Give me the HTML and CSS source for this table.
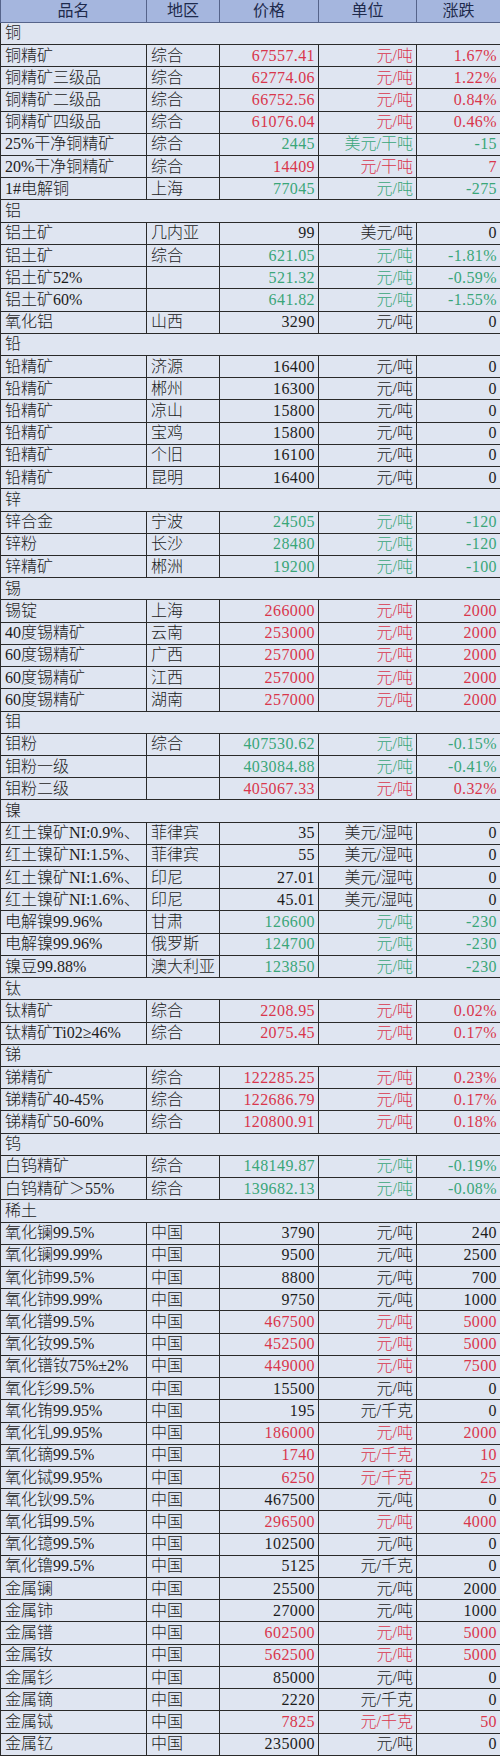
FILE: index.html
```html
<!DOCTYPE html>
<html lang="zh-CN">
<head>
<meta charset="utf-8">
<title>有色金属价格</title>
<link rel="stylesheet" href="styles.css">
</head>
<body>
<table class="price-table">
<colgroup>
<col class="c-name"><col class="c-region"><col class="c-price"><col class="c-unit"><col class="c-chg">
</colgroup>
<thead>
<tr><th>品名</th><th>地区</th><th>价格</th><th>单位</th><th>涨跌</th></tr>
</thead>
<tbody>
<tr class="cat"><td colspan="5">铜</td></tr>
<tr class="r"><td>铜精矿</td><td>综合</td><td>67557.41</td><td>元/吨</td><td>1.67%</td></tr>
<tr class="r"><td>铜精矿三级品</td><td>综合</td><td>62774.06</td><td>元/吨</td><td>1.22%</td></tr>
<tr class="r"><td>铜精矿二级品</td><td>综合</td><td>66752.56</td><td>元/吨</td><td>0.84%</td></tr>
<tr class="r"><td>铜精矿四级品</td><td>综合</td><td>61076.04</td><td>元/吨</td><td>0.46%</td></tr>
<tr class="g"><td>25%干净铜精矿</td><td>综合</td><td>2445</td><td>美元/干吨</td><td>-15</td></tr>
<tr class="r"><td>20%干净铜精矿</td><td>综合</td><td>14409</td><td>元/干吨</td><td>7</td></tr>
<tr class="g"><td>1#电解铜</td><td>上海</td><td>77045</td><td>元/吨</td><td>-275</td></tr>
<tr class="cat"><td colspan="5">铝</td></tr>
<tr><td>铝土矿</td><td>几内亚</td><td>99</td><td>美元/吨</td><td>0</td></tr>
<tr class="g"><td>铝土矿</td><td>综合</td><td>621.05</td><td>元/吨</td><td>-1.81%</td></tr>
<tr class="g"><td>铝土矿52%</td><td></td><td>521.32</td><td>元/吨</td><td>-0.59%</td></tr>
<tr class="g"><td>铝土矿60%</td><td></td><td>641.82</td><td>元/吨</td><td>-1.55%</td></tr>
<tr><td>氧化铝</td><td>山西</td><td>3290</td><td>元/吨</td><td>0</td></tr>
<tr class="cat"><td colspan="5">铅</td></tr>
<tr><td>铅精矿</td><td>济源</td><td>16400</td><td>元/吨</td><td>0</td></tr>
<tr><td>铅精矿</td><td>郴州</td><td>16300</td><td>元/吨</td><td>0</td></tr>
<tr><td>铅精矿</td><td>凉山</td><td>15800</td><td>元/吨</td><td>0</td></tr>
<tr><td>铅精矿</td><td>宝鸡</td><td>15800</td><td>元/吨</td><td>0</td></tr>
<tr><td>铅精矿</td><td>个旧</td><td>16100</td><td>元/吨</td><td>0</td></tr>
<tr><td>铅精矿</td><td>昆明</td><td>16400</td><td>元/吨</td><td>0</td></tr>
<tr class="cat"><td colspan="5">锌</td></tr>
<tr class="g"><td>锌合金</td><td>宁波</td><td>24505</td><td>元/吨</td><td>-120</td></tr>
<tr class="g"><td>锌粉</td><td>长沙</td><td>28480</td><td>元/吨</td><td>-120</td></tr>
<tr class="g"><td>锌精矿</td><td>郴洲</td><td>19200</td><td>元/吨</td><td>-100</td></tr>
<tr class="cat"><td colspan="5">锡</td></tr>
<tr class="r"><td>锡锭</td><td>上海</td><td>266000</td><td>元/吨</td><td>2000</td></tr>
<tr class="r"><td>40度锡精矿</td><td>云南</td><td>253000</td><td>元/吨</td><td>2000</td></tr>
<tr class="r"><td>60度锡精矿</td><td>广西</td><td>257000</td><td>元/吨</td><td>2000</td></tr>
<tr class="r"><td>60度锡精矿</td><td>江西</td><td>257000</td><td>元/吨</td><td>2000</td></tr>
<tr class="r"><td>60度锡精矿</td><td>湖南</td><td>257000</td><td>元/吨</td><td>2000</td></tr>
<tr class="cat"><td colspan="5">钼</td></tr>
<tr class="g"><td>钼粉</td><td>综合</td><td>407530.62</td><td>元/吨</td><td>-0.15%</td></tr>
<tr class="g"><td>钼粉一级</td><td></td><td>403084.88</td><td>元/吨</td><td>-0.41%</td></tr>
<tr class="r"><td>钼粉二级</td><td></td><td>405067.33</td><td>元/吨</td><td>0.32%</td></tr>
<tr class="cat"><td colspan="5">镍</td></tr>
<tr><td>红土镍矿NI:0.9%、</td><td>菲律宾</td><td>35</td><td>美元/湿吨</td><td>0</td></tr>
<tr><td>红土镍矿NI:1.5%、</td><td>菲律宾</td><td>55</td><td>美元/湿吨</td><td>0</td></tr>
<tr><td>红土镍矿NI:1.6%、</td><td>印尼</td><td>27.01</td><td>美元/湿吨</td><td>0</td></tr>
<tr><td>红土镍矿NI:1.6%、</td><td>印尼</td><td>45.01</td><td>美元/湿吨</td><td>0</td></tr>
<tr class="g"><td>电解镍99.96%</td><td>甘肃</td><td>126600</td><td>元/吨</td><td>-230</td></tr>
<tr class="g"><td>电解镍99.96%</td><td>俄罗斯</td><td>124700</td><td>元/吨</td><td>-230</td></tr>
<tr class="g"><td>镍豆99.88%</td><td>澳大利亚</td><td>123850</td><td>元/吨</td><td>-230</td></tr>
<tr class="cat"><td colspan="5">钛</td></tr>
<tr class="r"><td>钛精矿</td><td>综合</td><td>2208.95</td><td>元/吨</td><td>0.02%</td></tr>
<tr class="r"><td>钛精矿Ti02≥46%</td><td>综合</td><td>2075.45</td><td>元/吨</td><td>0.17%</td></tr>
<tr class="cat"><td colspan="5">锑</td></tr>
<tr class="r"><td>锑精矿</td><td>综合</td><td>122285.25</td><td>元/吨</td><td>0.23%</td></tr>
<tr class="r"><td>锑精矿40-45%</td><td>综合</td><td>122686.79</td><td>元/吨</td><td>0.17%</td></tr>
<tr class="r"><td>锑精矿50-60%</td><td>综合</td><td>120800.91</td><td>元/吨</td><td>0.18%</td></tr>
<tr class="cat"><td colspan="5">钨</td></tr>
<tr class="g"><td>白钨精矿</td><td>综合</td><td>148149.87</td><td>元/吨</td><td>-0.19%</td></tr>
<tr class="g"><td>白钨精矿＞55%</td><td>综合</td><td>139682.13</td><td>元/吨</td><td>-0.08%</td></tr>
<tr class="cat"><td colspan="5">稀土</td></tr>
<tr><td>氧化镧99.5%</td><td>中国</td><td>3790</td><td>元/吨</td><td>240</td></tr>
<tr><td>氧化镧99.99%</td><td>中国</td><td>9500</td><td>元/吨</td><td>2500</td></tr>
<tr><td>氧化铈99.5%</td><td>中国</td><td>8800</td><td>元/吨</td><td>700</td></tr>
<tr><td>氧化铈99.99%</td><td>中国</td><td>9750</td><td>元/吨</td><td>1000</td></tr>
<tr class="r"><td>氧化镨99.5%</td><td>中国</td><td>467500</td><td>元/吨</td><td>5000</td></tr>
<tr class="r"><td>氧化钕99.5%</td><td>中国</td><td>452500</td><td>元/吨</td><td>5000</td></tr>
<tr class="r"><td>氧化镨钕75%±2%</td><td>中国</td><td>449000</td><td>元/吨</td><td>7500</td></tr>
<tr><td>氧化钐99.5%</td><td>中国</td><td>15500</td><td>元/吨</td><td>0</td></tr>
<tr><td>氧化铕99.95%</td><td>中国</td><td>195</td><td>元/千克</td><td>0</td></tr>
<tr class="r"><td>氧化钆99.95%</td><td>中国</td><td>186000</td><td>元/吨</td><td>2000</td></tr>
<tr class="r"><td>氧化镝99.5%</td><td>中国</td><td>1740</td><td>元/千克</td><td>10</td></tr>
<tr class="r"><td>氧化铽99.95%</td><td>中国</td><td>6250</td><td>元/千克</td><td>25</td></tr>
<tr><td>氧化钬99.5%</td><td>中国</td><td>467500</td><td>元/吨</td><td>0</td></tr>
<tr class="r"><td>氧化铒99.5%</td><td>中国</td><td>296500</td><td>元/吨</td><td>4000</td></tr>
<tr><td>氧化镱99.5%</td><td>中国</td><td>102500</td><td>元/吨</td><td>0</td></tr>
<tr><td>氧化镥99.5%</td><td>中国</td><td>5125</td><td>元/千克</td><td>0</td></tr>
<tr><td>金属镧</td><td>中国</td><td>25500</td><td>元/吨</td><td>2000</td></tr>
<tr><td>金属铈</td><td>中国</td><td>27000</td><td>元/吨</td><td>1000</td></tr>
<tr class="r"><td>金属镨</td><td>中国</td><td>602500</td><td>元/吨</td><td>5000</td></tr>
<tr class="r"><td>金属钕</td><td>中国</td><td>562500</td><td>元/吨</td><td>5000</td></tr>
<tr><td>金属钐</td><td>中国</td><td>85000</td><td>元/吨</td><td>0</td></tr>
<tr><td>金属镝</td><td>中国</td><td>2220</td><td>元/千克</td><td>0</td></tr>
<tr class="r"><td>金属铽</td><td>中国</td><td>7825</td><td>元/千克</td><td>50</td></tr>
<tr><td>金属钇</td><td>中国</td><td>235000</td><td>元/吨</td><td>0</td></tr>
</tbody>
</table>
</body>
</html>
```
FILE: styles.css
```css
html, body {
  margin: 0;
  padding: 0;
  background: #dfe5f1;
}

.price-table {
  width: 500px;
  height: 1756px;
  border-collapse: collapse;
  table-layout: fixed;
  font-family: "Liberation Serif", "Noto Sans CJK SC", serif;
  font-size: 16px;
  font-weight: 300;
  line-height: 1;
  color: #1c1c1c;
  background: #dfe5f1;
}

.c-name { width: 146px; }
.c-region { width: 73px; }
.c-price { width: 99px; }
.c-unit { width: 98px; }
.c-chg { width: 84px; }

.price-table tr {
  height: 22.228px;
}

.price-table th {
  background: #a5b6de;
  color: #1e2a4c;
  font-weight: 400;
  text-align: center;
  border: 1px solid #56648a;
  border-top: none;
  padding: 0;
}

.price-table td {
  border: 1px solid #2a2a2a;
  padding: 0 3px 0 4px;
  white-space: nowrap;
  overflow: hidden;
  vertical-align: middle;
}

.price-table td:nth-child(1),
.price-table td:nth-child(2) {
  text-align: left;
}

.price-table td:nth-child(3),
.price-table td:nth-child(5) {
  text-align: right;
  letter-spacing: 0.4px;
}

.price-table td:nth-child(4) {
  text-align: right;
}

.price-table .cat td {
  text-align: left;
  letter-spacing: 0;
}

.price-table .r td:nth-child(3),
.price-table .r td:nth-child(4),
.price-table .r td:nth-child(5) {
  color: #d9364c;
}

.price-table .g td:nth-child(3),
.price-table .g td:nth-child(4),
.price-table .g td:nth-child(5) {
  color: #3aa679;
}
```
